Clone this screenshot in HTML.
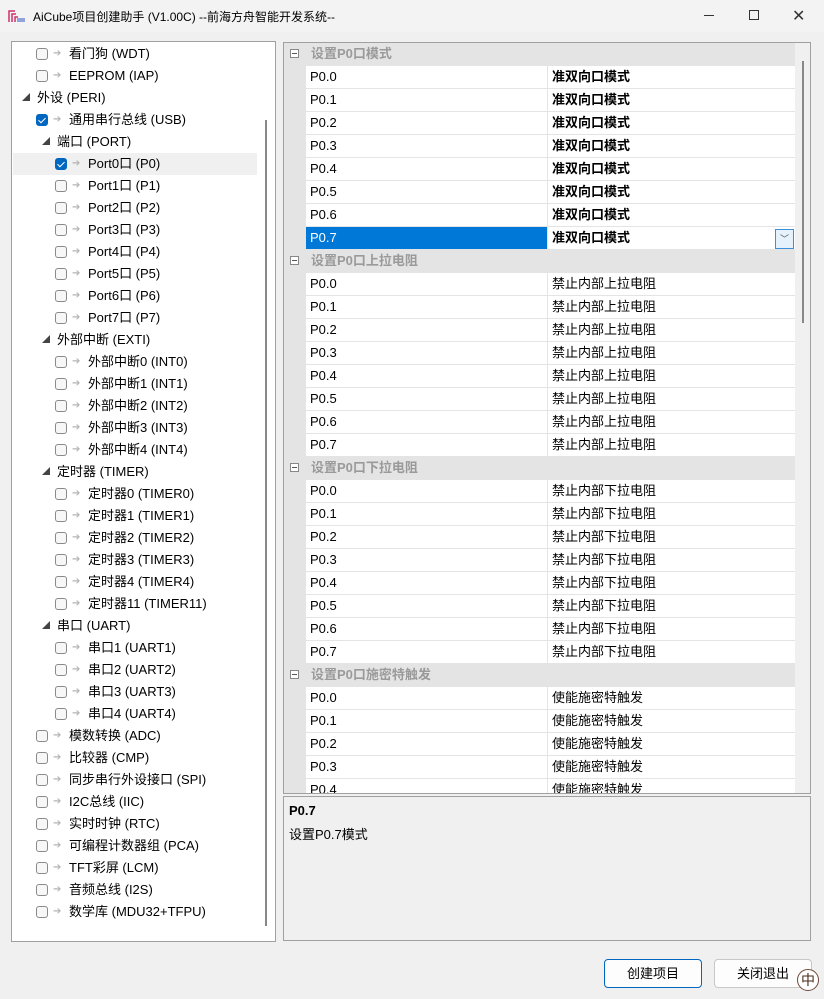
<!DOCTYPE html>
<html><head><meta charset="utf-8"><style>
*{margin:0;padding:0;box-sizing:border-box}
body{width:824px;height:999px;background:#f0f0f0;font-family:"Liberation Sans","Noto Sans CJK SC",sans-serif;font-size:13px;color:#000;position:relative;overflow:hidden}
.a{position:absolute}
#title{left:0;top:0;width:824px;height:32px;background:#f3f3f3}
#title .t{left:33px;top:8px;font-size:12px}
#tree{left:11px;top:41px;width:265px;height:901px;background:#fff;border:1px solid #a0a0a0;overflow:hidden}
.r{position:absolute;height:22px;line-height:22px;white-space:nowrap;left:0;width:245px}
.cb{position:absolute;top:5px;width:12px;height:12px;border:1px solid #8a8a8a;border-radius:3px;background:#f7f7f7}
.cb.on{background:#0067c0;border-color:#0067c0}
.cb.on:after{content:"";position:absolute;left:3px;top:1px;width:3px;height:6px;border:solid #fff;border-width:0 1.5px 1.5px 0;transform:rotate(45deg)}
.ar{position:absolute;top:0;color:#b5b5b5;font-size:10px}
.ex{position:absolute;top:0;font-size:8px;color:#444}
#grid{left:283px;top:42px;width:528px;height:752px;background:#f0f0f0;border:1px solid #a0a0a0;overflow:hidden}
.g{position:absolute;left:0;width:511px;height:23px;line-height:22px}
.cat{background:#e4e4e4;color:#9a9a9a;font-weight:bold}
.cat .m{position:absolute;left:6px;top:6px;width:9px;height:9px;border:1px solid #888;background:#fff}
.cat .m:after{content:"";position:absolute;left:1px;top:3px;width:5px;height:1px;background:#555}
.cat span{position:absolute;left:27px}
.row{background:#e4e4e4}
.row .n{position:absolute;left:22px;width:241px;height:22px;background:#fff;padding-left:4px}
.row .v{position:absolute;left:264px;width:247px;height:22px;background:#fff;padding-left:4px}
.b .v{font-weight:bold}
#desc{left:283px;top:796px;width:528px;height:145px;background:#f0f0f0;border:1px solid #a0a0a0}
.btn{top:959px;height:29px;width:98px;border:1px solid #c8c8c8;border-radius:4px;background:#fdfdfd;text-align:center;line-height:27px;font-size:13px}
</style></head><body>
<div id="title" class="a">
<svg class="a" style="left:8px;top:9px" width="18" height="14"><g stroke="#d0306a" stroke-width="1.5" fill="none"><path d="M1 13V2h6M4 13V5h4M7 13V8h3"/></g><path d="M9 10h8M9 12h8" stroke="#3050c0" stroke-width="1"/></svg>
<div class="a t">AiCube项目创建助手 (V1.00C) --前海方舟智能开发系统--</div>
<div class="a" style="left:704px;top:15px;width:10px;height:1px;background:#333"></div>
<div class="a" style="left:749px;top:10px;width:10px;height:10px;border:1px solid #333"></div>
<div class="a" style="left:792px;top:6px;font-size:16px;color:#333">✕</div>
</div>

<div id="tree" class="a">
<div class="a" style="left:253px;top:78px;width:2px;height:806px;background:#888"></div>
<div class="a" style="left:1px;top:111px;width:244px;height:22px;background:#f0f0f0"></div>
<div class="r" style="top:1px"><div class="cb" style="left:24px"></div><span class="ar" style="left:41px">➔</span><span class="a" style="left:57px">看门狗 (WDT)</span></div>
<div class="r" style="top:23px"><div class="cb" style="left:24px"></div><span class="ar" style="left:41px">➔</span><span class="a" style="left:57px">EEPROM (IAP)</span></div>
<div class="r" style="top:45px"><span class="ex" style="left:10px">◢</span><span class="a" style="left:25px">外设 (PERI)</span></div>
<div class="r" style="top:67px"><div class="cb on" style="left:24px"></div><span class="ar" style="left:41px">➔</span><span class="a" style="left:57px">通用串行总线 (USB)</span></div>
<div class="r" style="top:89px"><span class="ex" style="left:30px">◢</span><span class="a" style="left:45px">端口 (PORT)</span></div>
<div class="r" style="top:111px"><div class="cb on" style="left:43px"></div><span class="ar" style="left:60px">➔</span><span class="a" style="left:76px">Port0口 (P0)</span></div>
<div class="r" style="top:133px"><div class="cb" style="left:43px"></div><span class="ar" style="left:60px">➔</span><span class="a" style="left:76px">Port1口 (P1)</span></div>
<div class="r" style="top:155px"><div class="cb" style="left:43px"></div><span class="ar" style="left:60px">➔</span><span class="a" style="left:76px">Port2口 (P2)</span></div>
<div class="r" style="top:177px"><div class="cb" style="left:43px"></div><span class="ar" style="left:60px">➔</span><span class="a" style="left:76px">Port3口 (P3)</span></div>
<div class="r" style="top:199px"><div class="cb" style="left:43px"></div><span class="ar" style="left:60px">➔</span><span class="a" style="left:76px">Port4口 (P4)</span></div>
<div class="r" style="top:221px"><div class="cb" style="left:43px"></div><span class="ar" style="left:60px">➔</span><span class="a" style="left:76px">Port5口 (P5)</span></div>
<div class="r" style="top:243px"><div class="cb" style="left:43px"></div><span class="ar" style="left:60px">➔</span><span class="a" style="left:76px">Port6口 (P6)</span></div>
<div class="r" style="top:265px"><div class="cb" style="left:43px"></div><span class="ar" style="left:60px">➔</span><span class="a" style="left:76px">Port7口 (P7)</span></div>
<div class="r" style="top:287px"><span class="ex" style="left:30px">◢</span><span class="a" style="left:45px">外部中断 (EXTI)</span></div>
<div class="r" style="top:309px"><div class="cb" style="left:43px"></div><span class="ar" style="left:60px">➔</span><span class="a" style="left:76px">外部中断0 (INT0)</span></div>
<div class="r" style="top:331px"><div class="cb" style="left:43px"></div><span class="ar" style="left:60px">➔</span><span class="a" style="left:76px">外部中断1 (INT1)</span></div>
<div class="r" style="top:353px"><div class="cb" style="left:43px"></div><span class="ar" style="left:60px">➔</span><span class="a" style="left:76px">外部中断2 (INT2)</span></div>
<div class="r" style="top:375px"><div class="cb" style="left:43px"></div><span class="ar" style="left:60px">➔</span><span class="a" style="left:76px">外部中断3 (INT3)</span></div>
<div class="r" style="top:397px"><div class="cb" style="left:43px"></div><span class="ar" style="left:60px">➔</span><span class="a" style="left:76px">外部中断4 (INT4)</span></div>
<div class="r" style="top:419px"><span class="ex" style="left:30px">◢</span><span class="a" style="left:45px">定时器 (TIMER)</span></div>
<div class="r" style="top:441px"><div class="cb" style="left:43px"></div><span class="ar" style="left:60px">➔</span><span class="a" style="left:76px">定时器0 (TIMER0)</span></div>
<div class="r" style="top:463px"><div class="cb" style="left:43px"></div><span class="ar" style="left:60px">➔</span><span class="a" style="left:76px">定时器1 (TIMER1)</span></div>
<div class="r" style="top:485px"><div class="cb" style="left:43px"></div><span class="ar" style="left:60px">➔</span><span class="a" style="left:76px">定时器2 (TIMER2)</span></div>
<div class="r" style="top:507px"><div class="cb" style="left:43px"></div><span class="ar" style="left:60px">➔</span><span class="a" style="left:76px">定时器3 (TIMER3)</span></div>
<div class="r" style="top:529px"><div class="cb" style="left:43px"></div><span class="ar" style="left:60px">➔</span><span class="a" style="left:76px">定时器4 (TIMER4)</span></div>
<div class="r" style="top:551px"><div class="cb" style="left:43px"></div><span class="ar" style="left:60px">➔</span><span class="a" style="left:76px">定时器11 (TIMER11)</span></div>
<div class="r" style="top:573px"><span class="ex" style="left:30px">◢</span><span class="a" style="left:45px">串口 (UART)</span></div>
<div class="r" style="top:595px"><div class="cb" style="left:43px"></div><span class="ar" style="left:60px">➔</span><span class="a" style="left:76px">串口1 (UART1)</span></div>
<div class="r" style="top:617px"><div class="cb" style="left:43px"></div><span class="ar" style="left:60px">➔</span><span class="a" style="left:76px">串口2 (UART2)</span></div>
<div class="r" style="top:639px"><div class="cb" style="left:43px"></div><span class="ar" style="left:60px">➔</span><span class="a" style="left:76px">串口3 (UART3)</span></div>
<div class="r" style="top:661px"><div class="cb" style="left:43px"></div><span class="ar" style="left:60px">➔</span><span class="a" style="left:76px">串口4 (UART4)</span></div>
<div class="r" style="top:683px"><div class="cb" style="left:24px"></div><span class="ar" style="left:41px">➔</span><span class="a" style="left:57px">模数转换 (ADC)</span></div>
<div class="r" style="top:705px"><div class="cb" style="left:24px"></div><span class="ar" style="left:41px">➔</span><span class="a" style="left:57px">比较器 (CMP)</span></div>
<div class="r" style="top:727px"><div class="cb" style="left:24px"></div><span class="ar" style="left:41px">➔</span><span class="a" style="left:57px">同步串行外设接口 (SPI)</span></div>
<div class="r" style="top:749px"><div class="cb" style="left:24px"></div><span class="ar" style="left:41px">➔</span><span class="a" style="left:57px">I2C总线 (IIC)</span></div>
<div class="r" style="top:771px"><div class="cb" style="left:24px"></div><span class="ar" style="left:41px">➔</span><span class="a" style="left:57px">实时时钟 (RTC)</span></div>
<div class="r" style="top:793px"><div class="cb" style="left:24px"></div><span class="ar" style="left:41px">➔</span><span class="a" style="left:57px">可编程计数器组 (PCA)</span></div>
<div class="r" style="top:815px"><div class="cb" style="left:24px"></div><span class="ar" style="left:41px">➔</span><span class="a" style="left:57px">TFT彩屏 (LCM)</span></div>
<div class="r" style="top:837px"><div class="cb" style="left:24px"></div><span class="ar" style="left:41px">➔</span><span class="a" style="left:57px">音频总线 (I2S)</span></div>
<div class="r" style="top:859px"><div class="cb" style="left:24px"></div><span class="ar" style="left:41px">➔</span><span class="a" style="left:57px">数学库 (MDU32+TFPU)</span></div>
</div>

<div id="grid" class="a">
<div class="a" style="left:518px;top:18px;width:2px;height:262px;background:#888"></div>
<div class="g cat" style="top:0"><div class="m"></div><span>设置P0口模式</span></div>
<div class="g row b" style="top:23px"><div class="n">P0.0</div><div class="v">准双向口模式</div></div>
<div class="g row b" style="top:46px"><div class="n">P0.1</div><div class="v">准双向口模式</div></div>
<div class="g row b" style="top:69px"><div class="n">P0.2</div><div class="v">准双向口模式</div></div>
<div class="g row b" style="top:92px"><div class="n">P0.3</div><div class="v">准双向口模式</div></div>
<div class="g row b" style="top:115px"><div class="n">P0.4</div><div class="v">准双向口模式</div></div>
<div class="g row b" style="top:138px"><div class="n">P0.5</div><div class="v">准双向口模式</div></div>
<div class="g row b" style="top:161px"><div class="n">P0.6</div><div class="v">准双向口模式</div></div>
<div class="g row b" style="top:184px"><div class="n" style="background:#0078d7;color:#fff">P0.7</div><div class="v">准双向口模式</div><div class="a" style="left:491px;top:2px;width:19px;height:20px;border:1px solid #3c8fd8;background:#e5f1fb;color:#555;font-size:9px;text-align:center;line-height:18px">﹀</div></div>
<div class="g cat" style="top:207px"><div class="m"></div><span>设置P0口上拉电阻</span></div>
<div class="g row" style="top:230px"><div class="n">P0.0</div><div class="v">禁止内部上拉电阻</div></div>
<div class="g row" style="top:253px"><div class="n">P0.1</div><div class="v">禁止内部上拉电阻</div></div>
<div class="g row" style="top:276px"><div class="n">P0.2</div><div class="v">禁止内部上拉电阻</div></div>
<div class="g row" style="top:299px"><div class="n">P0.3</div><div class="v">禁止内部上拉电阻</div></div>
<div class="g row" style="top:322px"><div class="n">P0.4</div><div class="v">禁止内部上拉电阻</div></div>
<div class="g row" style="top:345px"><div class="n">P0.5</div><div class="v">禁止内部上拉电阻</div></div>
<div class="g row" style="top:368px"><div class="n">P0.6</div><div class="v">禁止内部上拉电阻</div></div>
<div class="g row" style="top:391px"><div class="n">P0.7</div><div class="v">禁止内部上拉电阻</div></div>
<div class="g cat" style="top:414px"><div class="m"></div><span>设置P0口下拉电阻</span></div>
<div class="g row" style="top:437px"><div class="n">P0.0</div><div class="v">禁止内部下拉电阻</div></div>
<div class="g row" style="top:460px"><div class="n">P0.1</div><div class="v">禁止内部下拉电阻</div></div>
<div class="g row" style="top:483px"><div class="n">P0.2</div><div class="v">禁止内部下拉电阻</div></div>
<div class="g row" style="top:506px"><div class="n">P0.3</div><div class="v">禁止内部下拉电阻</div></div>
<div class="g row" style="top:529px"><div class="n">P0.4</div><div class="v">禁止内部下拉电阻</div></div>
<div class="g row" style="top:552px"><div class="n">P0.5</div><div class="v">禁止内部下拉电阻</div></div>
<div class="g row" style="top:575px"><div class="n">P0.6</div><div class="v">禁止内部下拉电阻</div></div>
<div class="g row" style="top:598px"><div class="n">P0.7</div><div class="v">禁止内部下拉电阻</div></div>
<div class="g cat" style="top:621px"><div class="m"></div><span>设置P0口施密特触发</span></div>
<div class="g row" style="top:644px"><div class="n">P0.0</div><div class="v">使能施密特触发</div></div>
<div class="g row" style="top:667px"><div class="n">P0.1</div><div class="v">使能施密特触发</div></div>
<div class="g row" style="top:690px"><div class="n">P0.2</div><div class="v">使能施密特触发</div></div>
<div class="g row" style="top:713px"><div class="n">P0.3</div><div class="v">使能施密特触发</div></div>
<div class="g row" style="top:736px"><div class="n">P0.4</div><div class="v">使能施密特触发</div></div>
</div>

<div id="desc" class="a">
<div class="a" style="left:5px;top:6px;font-weight:bold">P0.7</div>
<div class="a" style="left:5px;top:27px">设置P0.7模式</div>
</div>

<div class="a btn" style="left:604px;border-color:#0067c0">创建项目</div>
<div class="a btn" style="left:714px">关闭退出</div>
<div class="a" style="left:797px;top:969px;width:22px;height:22px;border:1px solid #6a4a3a;border-radius:50%;background:#fff;text-align:center;line-height:20px;font-size:14px;color:#4a2a1a">中</div>
</body></html>
